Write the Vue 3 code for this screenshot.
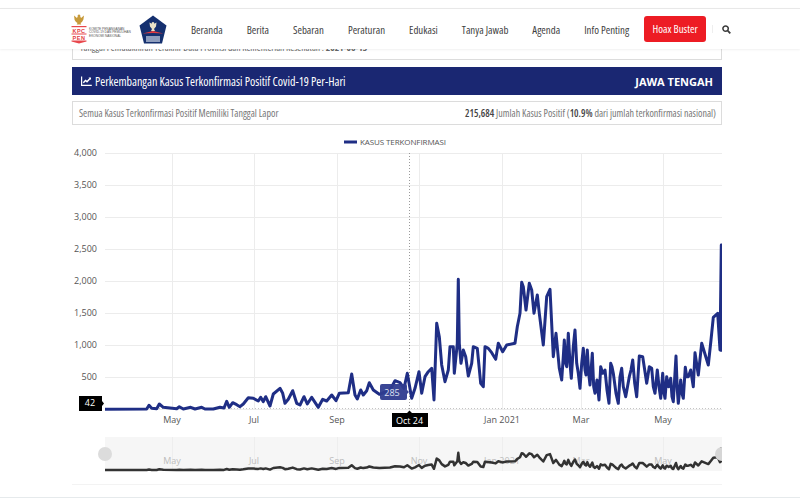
<script setup>
import { computed } from 'vue'

const menu = ['Beranda', 'Berita', 'Sebaran', 'Peraturan', 'Edukasi', 'Tanya Jawab', 'Agenda', 'Info Penting']

const yTicks = [
  { label: '4,000', y: 153 }, { label: '3,500', y: 185 }, { label: '3,000', y: 217 }, { label: '2,500', y: 249 },
  { label: '2,000', y: 281 }, { label: '1,500', y: 313 }, { label: '1,000', y: 345 }, { label: '500', y: 377 },
]
const xTicks = [
  { label: 'May', x: 172 }, { label: 'Jul', x: 254 }, { label: 'Sep', x: 337 }, { label: 'Nov', x: 419 },
  { label: 'Jan 2021', x: 502 }, { label: 'Mar', x: 581 }, { label: 'May', x: 663 },
]

// traced from the chart, first part: x = 100 + a/3, y = 300 + b/3
const firstPart = [
  15,328, 140,327, 147,316, 155,325, 170,326, 178,312, 190,322, 230,326, 238,320, 250,327, 272,322, 285,327,
  305,322, 315,327, 340,327, 360,322, 372,324, 380,304, 388,322, 398,308, 410,314, 420,320, 430,312, 445,293,
  460,295, 475,303, 482,292, 490,305, 497,290, 510,318, 520,282, 540,265, 548,280, 555,310, 565,298, 578,272,
  590,310, 600,315, 612,290, 622,312, 635,292, 655,322, 668,298, 680,303, 695,285, 708,302, 718,280, 745,278,
  755,222, 765,285, 772,297, 782,270, 790,285, 800,272, 808,248, 820,270, 838,283, 870,270, 885,242, 900,248, 912,265,
]
// second part: x = 400 + a/3, y = 230 + b/3
const secondPart = [
  22,430, 35,505, 45,475, 57,425, 65,490, 75,440, 85,425, 95,415, 102,510, 110,280, 118,320, 125,405, 135,455,
  145,420, 150,350, 160,350, 163,430, 172,340, 175,148, 178,340, 183,400, 190,360, 197,380, 205,438, 215,400,
  220,350, 232,355, 242,460, 250,470, 255,350, 265,355, 275,368, 287,388, 295,340, 308,365, 320,345, 345,340,
  352,290, 360,250, 365,157, 370,170, 378,240, 388,160, 395,180, 402,250, 412,195, 418,250, 430,345, 440,200,
  450,178, 460,380, 468,310, 478,415, 485,450, 490,380, 493,330, 497,400, 500,410, 505,310, 510,400, 514,445,
  520,350, 525,300, 530,400, 535,430, 540,475, 545,400, 550,355, 555,420, 558,435, 562,360, 566,430, 570,465,
  577,370, 581,470, 585,490, 591,450, 597,510, 602,410, 608,430, 615,420, 621,480, 627,520, 632,400, 636,410,
  640,430, 648,490, 655,520, 660,440, 665,415, 670,470, 677,500, 688,440, 693,420, 698,390, 704,460, 710,500,
  718,378, 728,380, 734,420, 740,460, 748,410, 755,415, 760,470, 765,490, 772,420, 777,470, 782,505, 788,430,
  792,490, 795,505, 800,440, 806,470, 812,445, 816,500, 820,515, 828,378, 832,480, 835,520, 842,450, 846,490,
  850,505, 856,412, 860,440, 865,440, 872,420, 880,470, 885,368, 895,435, 905,340, 925,405, 933,330, 940,262,
  953,250, 960,360, 964,45, 965,365,
]

const trace = computed(() => {
  const pts = []
  for (let i = 0; i < firstPart.length; i += 2) pts.push([100 + firstPart[i] / 3, 300 + firstPart[i + 1] / 3])
  for (let i = 0; i < secondPart.length; i += 2) pts.push([400 + secondPart[i] / 3, 230 + secondPart[i + 1] / 3])
  return pts
})
const mainLine = computed(() => trace.value.map(p => p[0].toFixed(1) + ',' + p[1].toFixed(1)).join(' '))
// the navigator below shows the same series squeezed into its strip
const miniLine = computed(() => trace.value.map(p => p[0].toFixed(1) + ',' + (470 - (409 - p[1]) * 0.133).toFixed(1)).join(' '))
</script>

<template>
  <div class="page">
    <header class="topbar">
      <div class="logos">
        <div class="kpc">
          <svg class="kpc-mark" width="16" height="30" viewBox="0 0 16 30">
            <path d="M8 0.5c1 0 1.6.8 1.2 1.8L10 4l3-2.500-.6 4-1.400 2.500-1.500 1 .8 1.500H5.700l.8-1.500-1.500-1L3.600 6 3 1.500 6 4l.8-1.700C6.400 1.300 7 .5 8 .5z" fill="#c79a3a"/>
            <rect x="0.500" y="12" width="15" height="1.200" fill="#e8474c"/>
            <rect x="0.500" y="19.500" width="15" height="1" fill="#e8474c"/>
            <path d="M0.500 26.500h15v1L8 29.500 0.500 27.500z" fill="#e8474c"/>
            <text x="8" y="18.500" class="kpc-letters">KPC</text>
            <text x="8" y="25.800" class="kpc-letters">PEN</text>
          </svg>
          <div class="kpc-name">KOMITE PENANGANAN<br>COVID-19 DAN PEMULIHAN<br>EKONOMI NASIONAL</div>
        </div>
        <svg width="28" height="29" viewBox="0 0 28 29">
          <path d="M14 0.500L27.500 10.500 23 28.500H5L0.500 10.500z" fill="#15306f"/>
          <path d="M14 7c1 0 1.500 1 1.200 1.800l2.300-1.300-.5 4-2 2.500 1 2H12l1-2-2-2.500-.5-4 2.300 1.300C12.500 8 13 7 14 7z" fill="#e9e2c8"/>
          <path d="M3.500 18.500L14 16l10.500 2.500L14 18z" fill="#e33b3f"/>
          <rect x="7" y="21" width="14" height="6" fill="#dfe6f2" opacity="0.6"/>
        </svg>
      </div>
      <nav class="menu">
        <a v-for="item in menu" :key="item" class="menu-item">{{ item }}</a>
        <a class="hoax">Hoax Buster</a>
        <span class="divider"></span>
        <svg class="search" width="9" height="9" viewBox="0 0 10 10">
          <circle cx="4" cy="4" r="3" fill="none" stroke="#3d3d3d" stroke-width="1.700"/>
          <path d="M6.300 6.300L9.200 9.200" stroke="#3d3d3d" stroke-width="2"/>
        </svg>
      </nav>
    </header>

    <main class="content">
      <div class="update-box">
        Tanggal Pemutakhiran Terakhir Data Provinsi dan Kementerian Kesehatan : <b>2021-06-13</b>
      </div>

      <div class="title-bar">
        <span class="title">
          <svg width="11" height="10" viewBox="0 0 11 10">
            <path d="M0.600 0.500V9.300H10.800" fill="none" stroke="#fff" stroke-width="1.200"/>
            <path d="M2.300 6.700L4.500 4.500 6 5.700 9 2.500" fill="none" stroke="#fff" stroke-width="1.500"/>
            <path d="M7.500 1.500H10V4z" fill="#fff"/>
          </svg>
          Perkembangan Kasus Terkonfirmasi Positif Covid-19 Per-Hari
        </span>
        <span class="region">JAWA TENGAH</span>
      </div>

      <div class="info-box">
        <span>Semua Kasus Terkonfirmasi Positif Memiliki Tanggal Lapor</span>
        <span><b>215,684</b> Jumlah Kasus Positif (<b>10.9%</b> dari jumlah terkonfirmasi nasional)</span>
      </div>

      <svg class="chart" width="650" height="360" viewBox="72 130 650 360">
        <defs>
          <clipPath id="plot"><rect x="105" y="130" width="617" height="350"/></clipPath>
        </defs>

        <rect x="344" y="140.500" width="13" height="3" fill="#1f2e85"/>
        <text x="360" y="145" class="legend">KASUS TERKONFIRMASI</text>

        <g stroke="#ececec" stroke-width="1">
          <line v-for="t in yTicks" :key="t.y" x1="105" x2="722" :y1="t.y + 0.500" :y2="t.y + 0.500"/>
          <line v-for="t in xTicks" :key="t.x" :x1="t.x + 0.500" :x2="t.x + 0.500" y1="153" y2="409"/>
          <line x1="105" x2="722" y1="409.500" y2="409.500"/>
        </g>
        <line x1="105" x2="722" y1="408.500" y2="408.500" stroke="#c4c4c4" stroke-dasharray="1 2"/>

        <text v-for="t in yTicks" :key="t.label" x="97" :y="t.y + 3" text-anchor="end" class="axis">{{ t.label }}</text>
        <template v-for="t in xTicks" :key="t.label + t.x">
          <text v-if="t.label !== 'Nov'" :x="t.x" y="423" text-anchor="middle" class="axis">{{ t.label }}</text>
        </template>

        <line x1="409.500" x2="409.500" y1="153" y2="410" stroke="#9a9a9a" stroke-dasharray="1 2"/>

        <polyline :points="mainLine" clip-path="url(#plot)" fill="none" stroke="#1f2e85" stroke-width="3" stroke-linejoin="round"/>

        <!-- navigator -->
        <rect x="105" y="437" width="617" height="34" fill="#f6f6f6"/>
        <g stroke="#eeeeee">
          <line v-for="t in xTicks" :key="t.x" :x1="t.x + 0.500" :x2="t.x + 0.500" y1="437" y2="471"/>
        </g>
        <text v-for="t in xTicks" :key="'n' + t.x" :x="t.x" y="464" text-anchor="middle" class="axis-faint">{{ t.label }}</text>
        <polyline :points="miniLine" clip-path="url(#plot)" fill="none" stroke="#333" stroke-width="2.500" stroke-linejoin="round"/>
        <circle cx="105" cy="454" r="7" fill="#dcdcdc"/>
        <circle cx="722" cy="454" r="7" fill="#d6d6d6" clip-path="url(#plot)"/>
        <line x1="72" x2="722" y1="484.500" y2="484.500" stroke="#f3f3f3"/>

        <!-- crosshair tooltips -->
        <path d="M382 384h23a2 2 0 0 1 2 2v4l2 2-2 2v4a2 2 0 0 1-2 2h-23a2 2 0 0 1-2-2v-12a2 2 0 0 1 2-2z" fill="#2f3c8f" opacity="0.950"/>
        <text x="392" y="395.500" text-anchor="middle" class="tip-light">285</text>
        <path d="M79 396h23v5l2 2.500-2 2.500v5h-23z" fill="#000"/>
        <text x="90" y="406" text-anchor="middle" class="tip">42</text>
        <path d="M392 413h15l2.500-2.500 2.500 2.500h16v14h-36z" fill="#000"/>
        <text x="409.500" y="423.500" text-anchor="middle" class="tip">Oct 24</text>
      </svg>
    </main>

    <div class="page-end"></div>
  </div>
</template>

<style scoped>
.page {
  position: relative;
  height: 500px;
  overflow: hidden;
  background: #fff;
  font-family: "Open Sans", "Liberation Sans", sans-serif;
}
.topbar {
  position: absolute;
  top: 8px;
  left: 0;
  right: 0;
  z-index: 5;
  height: 40px;
  display: flex;
  align-items: center;
  padding-left: 71px;
  background: #fff;
  border-top: 1px solid #e8e8e8;
  box-shadow: 0 1px 2px rgba(0, 0, 0, 0.06);
}
.logos {
  flex: none;
  display: flex;
  align-items: center;
  gap: 4px;
  width: 120px;
}
.kpc {
  display: flex;
  align-items: flex-end;
  gap: 2px;
}
.kpc-mark {
  display: block;
}
.kpc-letters {
  font: 700 5.500px "Liberation Sans", sans-serif;
  fill: #e23d42;
  text-anchor: middle;
  letter-spacing: 0.500px;
}
.kpc-name {
  width: 46px;
  padding-bottom: 6px;
  font: 3.200px/3.500px "Liberation Sans", sans-serif;
  color: #555;
  white-space: nowrap;
}
.menu {
  display: flex;
  align-items: center;
  gap: 24px;
  font-size: 10.850px;
  font-stretch: 75%;
  color: #3f3f3f;
}
.menu-item {
  white-space: nowrap;
}
.hoax {
  margin-left: -9px;
  width: 62px;
  height: 26px;
  line-height: 26px;
  text-align: center;
  color: #fff;
  background: #ed1c24;
  border-radius: 3px;
  white-space: nowrap;
}
.divider {
  width: 1px;
  height: 8px;
  margin-left: -18px;
  background: #eeeeee;
}
.search {
  margin-left: -15px;
}
.content {
  width: 650px;
  margin-left: 72px;
  padding-top: 40px;
}
.update-box {
  height: 20px;
  padding-left: 7px;
  line-height: 16px;
  font-size: 9.500px;
  font-stretch: 85%;
  color: #666;
  border: 1px solid #dcdcdc;
  border-top: 0;
  box-sizing: border-box;
  white-space: nowrap;
}
.title-bar {
  height: 28px;
  margin-top: 7px;
  padding: 0 9px;
  display: flex;
  align-items: center;
  justify-content: space-between;
  background: #1a2772;
  color: #fff;
}
.title {
  display: flex;
  align-items: center;
  gap: 3px;
  font-size: 12px;
  font-stretch: 75%;
}
.region {
  font-size: 11px;
  font-weight: 700;
  font-stretch: 95%;
}
.info-box {
  height: 24px;
  margin-top: 6px;
  padding: 0 5px 0 6px;
  display: flex;
  align-items: center;
  justify-content: space-between;
  box-sizing: border-box;
  border: 1px solid #dcdcdc;
  font-stretch: 85%;
  font-size: 10px;
  color: #777;
}
.info-box b {
  font-weight: 600;
  color: #444;
}
.chart {
  display: block;
  margin-top: 5px;
}
.legend {
  font-size: 8px;
  letter-spacing: -0.100px;
  fill: #555;
}
.axis {
  font-size: 9px;
  fill: #555;
}
.axis-faint {
  font-size: 9px;
  fill: #bdbdbd;
}
.tip {
  font-size: 9px;
  fill: #fff;
}
.tip-light {
  font-size: 9px;
  fill: #dfe2f2;
}
.page-end {
  position: absolute;
  left: 0;
  right: 0;
  top: 497px;
  height: 1px;
  background: #e6eaec;
}
</style>
